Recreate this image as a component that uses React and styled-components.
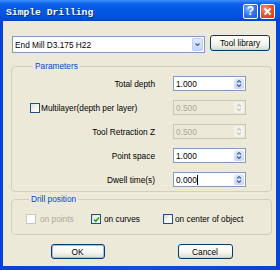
import React from 'react'
import styled, { createGlobalStyle } from 'styled-components'

const GlobalStyle = createGlobalStyle`
  html, body {
    margin: 0;
    padding: 0;
    background: #ffffff;
  }
  * {
    box-sizing: border-box;
  }
`

const Window = styled.div`
  width: 280px;
  height: 270px;
  display: flex;
  flex-direction: column;
  background: linear-gradient(90deg, #0842d8 0%, #0a50e0 50%, #0842d8 100%);
  padding: 0 4px 4px 3px;
  font-family: "Liberation Sans", Arial, sans-serif;
  font-size: 8.3px;
  color: #000;
`

const TitleBar = styled.div`
  height: 21px;
  display: flex;
  align-items: center;
  margin: 0 -4px 0 -3px;
  padding: 1px 5px 0 6px;
  background: linear-gradient(180deg, #3d8ff6 0%, #0b62eb 18%, #0558e5 45%, #0453e0 75%, #0444c9 100%);
`

const Title = styled.div`
  flex: 1;
  color: #fff;
  font-family: "Liberation Mono", "Courier New", monospace;
  font-weight: bold;
  font-size: 9.7px;
  padding-top: 2px;
  text-shadow: 1px 1px 0 #0a2e9c;
`

const CaptionButton = styled.div`
  width: 15px;
  height: 15px;
  margin-left: 2px;
  border: 1px solid #fff;
  border-radius: 2px;
  display: flex;
  align-items: center;
  justify-content: center;
  color: #fff;
  font-family: "Liberation Sans", Arial, sans-serif;
  font-weight: bold;
  font-size: 12px;
  background: ${p => p.$close
    ? 'radial-gradient(circle at 35% 30%, #f39a7c 0%, #e45a2f 45%, #c8381a 100%)'
    : 'radial-gradient(circle at 35% 30%, #8ab4ff 0%, #3474f0 50%, #1d56dc 100%)'};
`

const Client = styled.div`
  flex: 1;
  background: #ece9d8;
  display: flex;
  flex-direction: column;
  padding: 14px 4px 0 8px;
`

const ToolRow = styled.div`
  display: flex;
  align-items: flex-start;
  gap: 5px;
`

const Combo = styled.div`
  margin-left: 1px;
  margin-top: 1px;
  width: 193px;
  height: 17px;
  background: #fff;
  border: 1px solid #7f9db9;
  display: flex;
  align-items: center;
  padding: 1px 1px 1px 2px;
`

const ComboText = styled.div`
  flex: 1;
`

const DropButton = styled.div`
  width: 11px;
  height: 13px;
  border-radius: 2px;
  background: linear-gradient(180deg, #e2ebfd 0%, #c4d4fb 100%);
  border: 1px solid #b9cdf7;
  display: flex;
  align-items: center;
  justify-content: center;
`

const Button = styled.div`
  width: ${p => p.$w}px;
  height: ${p => p.$h || 15}px;
  border: 1px solid #003c74;
  border-radius: 3px;
  background: linear-gradient(180deg, #ffffff 0%, #f5f4ee 60%, #dcd9cb 100%);
  box-shadow: ${p => p.$default ? 'inset 0 0 0 1px #a3bdee' : 'inset 0 -1px 0 #d6d0c5'};
  display: flex;
  align-items: center;
  justify-content: center;
`

const Group = styled.fieldset`
  margin: ${p => p.$mt || 0}px 0 0 0;
  padding: ${p => p.$pad};
  border: 1px solid #d0d0bf;
  border-radius: 4px;
  min-width: 0;
`

const Legend = styled.legend`
  color: #0046d5;
  line-height: 9px;
  padding: 0 2px;
  margin-left: 3px;
`

const Rows = styled.div`
  display: flex;
  flex-direction: column;
  gap: 9px;
`

const Row = styled.div`
  display: grid;
  grid-template-columns: 1fr 73px;
  column-gap: 18px;
  align-items: center;
  height: 15px;
`

const RowLabel = styled.div`
  text-align: right;
`

const CheckLabel = styled.label`
  display: flex;
  align-items: center;
  gap: ${p => p.$gap || 3}px;
  color: ${p => p.$disabled ? '#aca899' : '#000'};
`

const Box = styled.span`
  width: 10px;
  height: 10px;
  flex: none;
  border: 1px solid ${p => p.$disabled ? '#cac8bb' : '#1c5180'};
  background: ${p => p.$disabled ? '#fff' : 'linear-gradient(135deg, #dcdcd7 0%, #f4f4f0 50%, #ffffff 100%)'};
  display: flex;
  align-items: center;
  justify-content: center;
`

const Spin = styled.div`
  height: 15px;
  display: flex;
  border: 1px solid ${p => p.$disabled ? '#c9c7ba' : '#7f9db9'};
  background: ${p => p.$disabled ? '#ebe8d7' : '#fff'};
`

const SpinValue = styled.div`
  flex: 1;
  padding-left: 2px;
  display: flex;
  align-items: center;
  color: ${p => p.$disabled ? '#aca899' : '#000'};
`

const Caret = styled.span`
  display: inline-block;
  width: 1px;
  height: 10px;
  background: #000;
`

const SpinButtons = styled.div`
  width: 10px;
  margin: 1px;
  border-radius: 2px;
  display: flex;
  align-items: center;
  justify-content: center;
  background: ${p => p.$disabled
    ? '#f4f3ee'
    : 'linear-gradient(180deg, #e3ebfd 0%, #c6d5fb 100%)'};
`

const CheckGrid = styled.div`
  display: grid;
  grid-template-columns: 65px 72px 1fr;
  align-items: center;
  height: 12px;
`

const Footer = styled.div`
  display: flex;
  justify-content: center;
  gap: 73px;
  margin-top: 9px;
`

const Chevron = ({ color = '#4d6185' }) => (
  <svg width="5" height="3" viewBox="0 0 5 3">
    <path d="M0.5 0.5 L2.5 2.5 L4.5 0.5" fill="none" stroke={color} strokeWidth="1.2" />
  </svg>
)

const SpinBox = ({ value, disabled, caret }) => (
  <Spin $disabled={disabled}>
    <SpinValue $disabled={disabled}>{value}{caret && <Caret />}</SpinValue>
    <SpinButtons $disabled={disabled}>
      <svg width="6" height="9" viewBox="0 0 6 9">
        <path d="M1 3.5 L3 1.5 L5 3.5 M1 5.5 L3 7.5 L5 5.5" fill="none" stroke={disabled ? '#c9c7ba' : '#4d6185'} strokeWidth="1.2" />
      </svg>
    </SpinButtons>
  </Spin>
)

const Check = ({ checked, disabled }) => (
  <Box $disabled={disabled}>
    {checked && (
      <svg width="7" height="7" viewBox="0 0 7 7">
        <path d="M1 3.5 L2.8 5.3 L6 1.5" fill="none" stroke="#21a121" strokeWidth="1.6" />
      </svg>
    )}
  </Box>
)

const App = () => (
  <>
    <GlobalStyle />
    <Window>
      <TitleBar>
        <Title>Simple Drilling</Title>
        <CaptionButton>?</CaptionButton>
        <CaptionButton $close>
          <svg width="9" height="9" viewBox="0 0 9 9">
            <path d="M1.5 1.5 L7.5 7.5 M7.5 1.5 L1.5 7.5" stroke="#fff" strokeWidth="1.8" />
          </svg>
        </CaptionButton>
      </TitleBar>
      <Client>
        <ToolRow>
          <Combo>
            <ComboText>End Mill D3.175 H22</ComboText>
            <DropButton><Chevron /></DropButton>
          </Combo>
          <Button $w={60} $h={16}>Tool library</Button>
        </ToolRow>

        <Group $mt={9} $pad="5px 25px 4px 18px">
          <Legend>Parameters</Legend>
          <Rows>
            <Row>
              <RowLabel>Total depth</RowLabel>
              <SpinBox value="1.000" />
            </Row>
            <Row>
              <CheckLabel $gap={1}><Check />Multilayer(depth per layer)</CheckLabel>
              <SpinBox value="0.500" disabled />
            </Row>
            <Row>
              <RowLabel>Tool Retraction Z</RowLabel>
              <SpinBox value="0.500" disabled />
            </Row>
            <Row>
              <RowLabel>Point space</RowLabel>
              <SpinBox value="1.000" />
            </Row>
            <Row>
              <RowLabel>Dwell time(s)</RowLabel>
              <SpinBox value="0.000" caret />
            </Row>
          </Rows>
        </Group>

        <Group $mt={3} $pad="9px 10px 9px 14px">
          <Legend>Drill position</Legend>
          <CheckGrid>
            <CheckLabel $disabled $gap={4}><Check disabled />on points</CheckLabel>
            <CheckLabel><Check checked />on curves</CheckLabel>
            <CheckLabel $gap={2}><Check />on center of object</CheckLabel>
          </CheckGrid>
        </Group>

        <Footer>
          <Button $w={54} $default>OK</Button>
          <Button $w={55}>Cancel</Button>
        </Footer>
      </Client>
    </Window>
  </>
)

export default App
